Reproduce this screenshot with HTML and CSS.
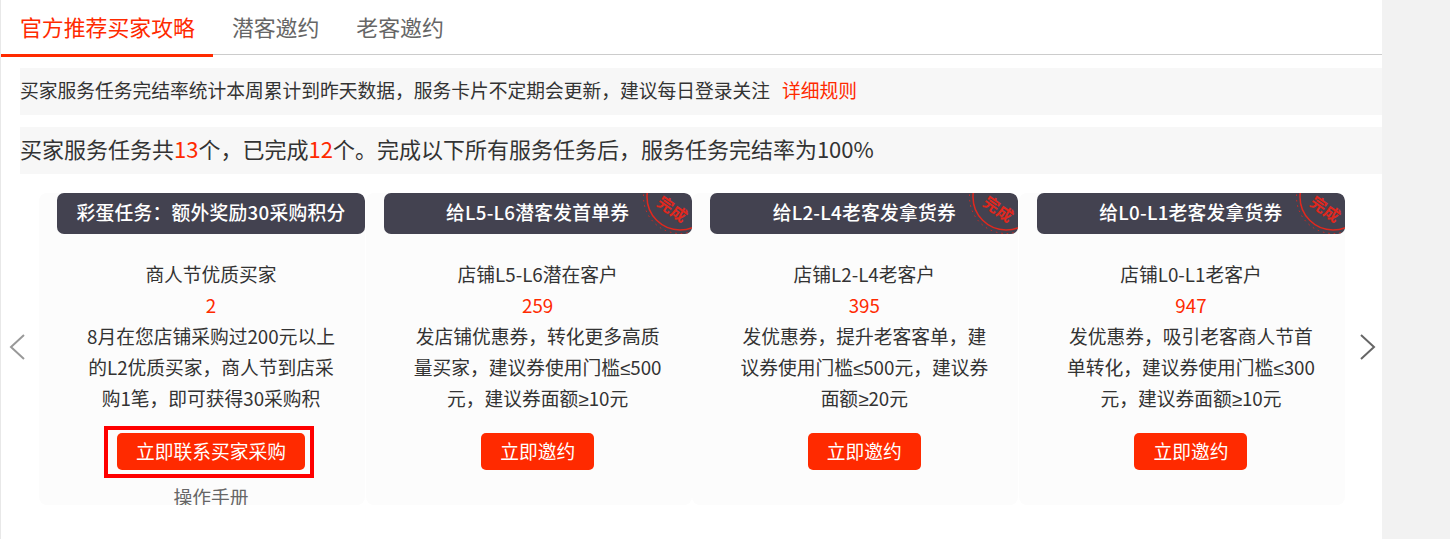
FILE: index.html
```html
<!DOCTYPE html>
<html lang="zh-CN">
<head>
  <meta charset="UTF-8" />
  <title>买家服务任务</title>
  <link rel="stylesheet" href="styles.css">
</head>
<body>
  <div class="page">
    <div class="tabs">
      <a class="tab active">官方推荐买家攻略</a>
      <a class="tab">潜客邀约</a>
      <a class="tab">老客邀约</a>
    </div>

    <div class="notice">买家服务任务完结率统计本周累计到昨天数据，服务卡片不定期会更新，建议每日登录关注<a class="rule-link">详细规则</a></div>
    <div class="summary">买家服务任务共<em>13</em>个，已完成<em>12</em>个。完成以下所有服务任务后，服务任务完结率为100%</div>

    <div class="carousel">
      <svg class="arrow arrow-left" width="18" height="28" viewBox="0 0 18 28"><polyline points="16,2 3,14 16,26" /></svg>

      <div class="card">
        <div class="card-head">彩蛋任务：额外奖励30采购积分</div>
        <div class="card-body">
          <p>商人节优质买家</p>
          <p class="count">2</p>
          <p>8月在您店铺采购过200元以上<br>的L2优质买家，商人节到店采<br>购1笔，即可获得30采购积</p>
          <button class="btn btn-marked">立即联系买家采购</button>
          <p class="manual">操作手册</p>
        </div>
      </div>

      <div class="card">
        <div class="card-head">给L5-L6潜客发首单券
          <svg class="stamp" width="50" height="41" viewBox="0 0 50 41"><circle class="ring" cx="38" cy="4" r="33" /><circle class="dots" cx="38" cy="4" r="36.5" /><text x="30" y="22" transform="rotate(35 30 17)">完成</text></svg>
        </div>
        <div class="card-body">
          <p>店铺L5-L6潜在客户</p>
          <p class="count">259</p>
          <p>发店铺优惠券，转化更多高质<br>量买家，建议券使用门槛<span class="sym">≤</span>500<br>元，建议券面额<span class="sym">≥</span>10元</p>
          <button class="btn">立即邀约</button>
        </div>
      </div>

      <div class="card">
        <div class="card-head">给L2-L4老客发拿货券
          <svg class="stamp" width="50" height="41" viewBox="0 0 50 41"><circle class="ring" cx="38" cy="4" r="33" /><circle class="dots" cx="38" cy="4" r="36.5" /><text x="30" y="22" transform="rotate(35 30 17)">完成</text></svg>
        </div>
        <div class="card-body">
          <p>店铺L2-L4老客户</p>
          <p class="count">395</p>
          <p>发优惠券，提升老客客单，建<br>议券使用门槛<span class="sym">≤</span>500元，建议券<br>面额<span class="sym">≥</span>20元</p>
          <button class="btn">立即邀约</button>
        </div>
      </div>

      <div class="card">
        <div class="card-head">给L0-L1老客发拿货券
          <svg class="stamp" width="50" height="41" viewBox="0 0 50 41"><circle class="ring" cx="38" cy="4" r="33" /><circle class="dots" cx="38" cy="4" r="36.5" /><text x="30" y="22" transform="rotate(35 30 17)">完成</text></svg>
        </div>
        <div class="card-body">
          <p>店铺L0-L1老客户</p>
          <p class="count">947</p>
          <p>发优惠券，吸引老客商人节首<br>单转化，建议券使用门槛<span class="sym">≤</span>300<br>元，建议券面额<span class="sym">≥</span>10元</p>
          <button class="btn">立即邀约</button>
        </div>
      </div>

      <svg class="arrow arrow-right" width="18" height="28" viewBox="0 0 18 28"><polyline points="2,2 15,14 2,26" /></svg>
    </div>
  </div>
</body>
</html>
```

FILE: styles.css
```css
html, body {
  margin: 0;
  height: 539px;
  overflow: hidden;
}
body {
  font-family: "Noto Sans CJK SC", "Noto Sans", sans-serif;
  background-color: #f2f2f2;
  color: #333;
}
.page {
  width: 1381px;
  height: 539px;
  background: #fff;
  border-left: 1px solid #e8e8e8;
}
.tabs {
  display: flex;
  height: 55px;
  padding-top: 1px;
  box-sizing: border-box;
  border-bottom: 1px solid #ccc;
}
.tab {
  height: 56px;
  box-sizing: border-box;
  padding: 9px 18px 0 19px;
  font-size: 21.875px;
  line-height: 34px;
  color: #666;
}
.tab.active {
  color: #ff2a00;
  border-bottom: 3px solid #ff2a00;
}
.notice, .summary {
  margin-left: 19px;
  height: 47px;
  background: #f7f7f7;
  white-space: nowrap;
}
.notice {
  margin-top: 13px;
  font-size: 18.75px;
  line-height: 44px;
}
.rule-link {
  margin-left: 12px;
  color: #ff2a00;
}
.summary {
  margin-top: 12px;
  font-size: 22px;
  line-height: 43px;
}
.summary em {
  font-style: normal;
  color: #ff2a00;
}
.carousel {
  position: relative;
  display: flex;
  gap: 0.67px;
  margin-top: 19px;
  padding-left: 38px;
}
.card {
  width: 326px;
  height: 312px;
  box-sizing: border-box;
  padding-left: 18px;
  background: #fcfcfc;
  border-radius: 8px;
  overflow: hidden;
}
.card-head {
  position: relative;
  height: 41px;
  line-height: 37px;
  text-align: center;
  font-size: 18.75px;
  font-weight: 500;
  letter-spacing: 0.25px;
  color: #fff;
  background: #434250;
  border-radius: 7px;
  overflow: hidden;
}
.stamp {
  position: absolute;
  top: 0;
  right: 0;
}
.stamp circle {
  fill: none;
  stroke: #e0281e;
}
.stamp .ring {
  stroke-width: 1.5;
}
.stamp .dots {
  stroke-width: 1;
  stroke-dasharray: 1.5 4;
}
.stamp text {
  font-size: 16px;
  font-weight: 700;
  fill: #e0281e;
  text-anchor: middle;
}
.card-body {
  padding-top: 24px;
  text-align: center;
  font-size: 18.75px;
  line-height: 31px;
}
.card-body p {
  margin: 0;
}
.sym {
  font-family: "Liberation Sans", sans-serif;
  line-height: 1;
}
.count {
  color: #ff2a00;
}
.btn {
  position: relative;
  display: block;
  margin: 20px auto 0;
  height: 37px;
  padding: 0 19px 2px;
  border: none;
  border-radius: 5px;
  background: #ff2a00;
  color: #fff;
  font-family: inherit;
  font-size: 18.75px;
  line-height: 35px;
}
.btn-marked::after {
  content: "";
  position: absolute;
  top: -7px;
  right: -9px;
  bottom: -8px;
  left: -13px;
  border: 4px solid #f00;
}
.card-body .manual {
  margin-top: 11px;
  color: #666;
}
.arrow {
  position: absolute;
  top: 140px;
  fill: none;
  stroke-width: 2;
}
.arrow-left {
  left: 7px;
  stroke: #999;
}
.arrow-right {
  left: 1358px;
  stroke: #666;
}
```
